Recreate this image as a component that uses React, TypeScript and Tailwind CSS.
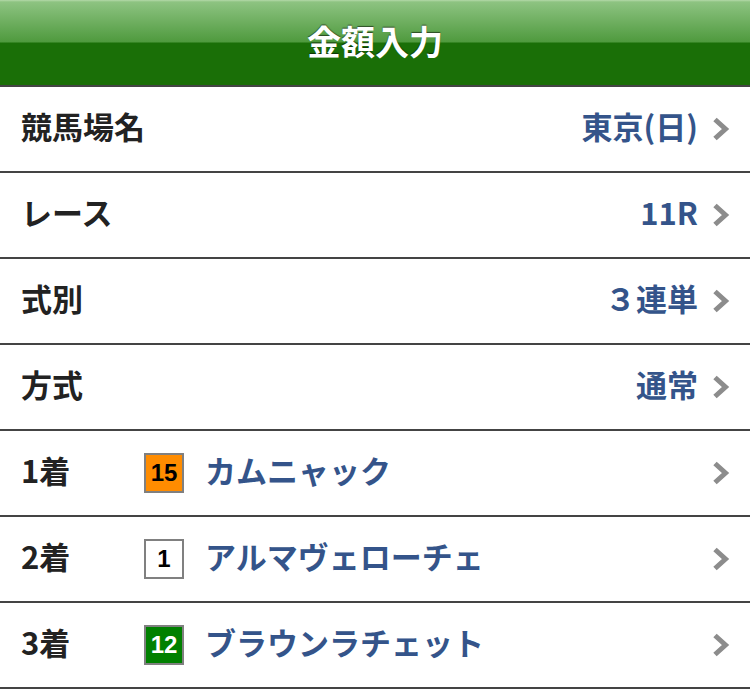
const font = { fontFamily: '"Hiragino Sans", "Noto Sans CJK JP", sans-serif' };

function Chevron() {
  return (
    <svg width="18" height="26" viewBox="0 0 18 26" className="shrink-0">
      <path d="M3 3.5 L13.5 13 L3 22.5" fill="none" stroke="#8c8c8c" strokeWidth="5" />
    </svg>
  );
}

function SettingRow({ label, value }: { label: string; value: string }) {
  return (
    <div className="h-[86px] flex items-center border-b-2 border-[#444] pl-[21px] pr-[20px]">
      <span className="mb-[6px] text-[31px] font-bold text-[#222]">{label}</span>
      <span className="ml-auto mb-[6px] mr-[14px] text-[31px] font-bold text-[#34548a]">{value}</span>
      <Chevron />
    </div>
  );
}

function HorseRow({ place, num, name, box }: { place: string; num: string; name: string; box: string }) {
  return (
    <div className="h-[86px] flex items-center border-b-2 border-[#444] pl-[21px] pr-[20px]">
      <span className="w-[123px] mb-[6px] text-[31px] font-bold text-[#222]">{place}</span>
      <span
        className={`w-[40px] h-[40px] flex items-center justify-center border-2 border-[#808080] text-[24px] font-bold font-['Liberation_Sans',Arial,sans-serif] ${box}`}
      >
        {num}
      </span>
      <span className="ml-[21px] mb-[6px] text-[31px] font-bold text-[#34548a]">{name}</span>
      <span className="ml-auto">
        <Chevron />
      </span>
    </div>
  );
}

export default function App() {
  return (
    <div className="w-[750px] h-[693px] bg-white overflow-hidden" style={font}>
      <div className="h-[87px] flex items-center justify-center border-b-2 border-[#444] bg-[linear-gradient(to_bottom,#b4d9a9_0px,#8dc381_2px,#4f9a3e_42px,#1a6f07_43px,#1a6f07_100%)]">
        <h1 className="mb-[4px] text-[34px] font-bold text-white [text-shadow:0_-1px_1px_rgba(0,0,0,0.55)]">金額入力</h1>
      </div>
      <SettingRow label="競馬場名" value="東京(日)" />
      <SettingRow label="レース" value="11R" />
      <SettingRow label="式別" value="３連単" />
      <SettingRow label="方式" value="通常" />
      <HorseRow place="1着" num="15" name="カムニャック" box="bg-[#ff8c00] text-black" />
      <HorseRow place="2着" num="1" name="アルマヴェローチェ" box="bg-white text-black" />
      <HorseRow place="3着" num="12" name="ブラウンラチェット" box="bg-[#008000] text-white" />
    </div>
  );
}
